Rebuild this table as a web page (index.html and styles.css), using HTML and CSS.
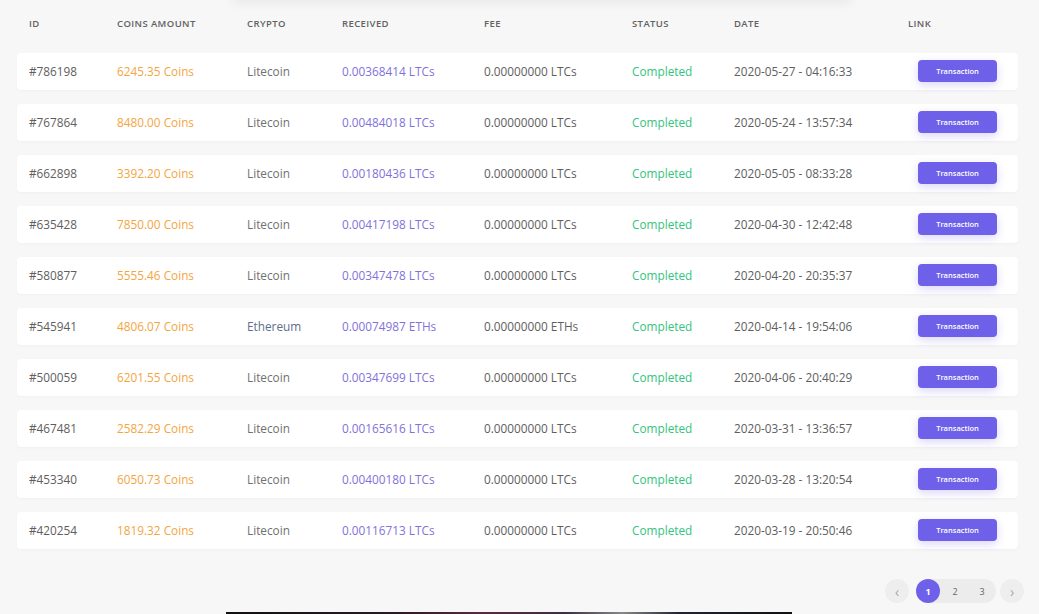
FILE: index.html
```html
<!DOCTYPE html>
<html>
<head>
<meta charset="utf-8">
<link rel="stylesheet" href="styles.css">
</head>
<body>
<div class="top-card"></div>
<div class="table">
  <div class="head">
    <span>ID</span><span>Coins Amount</span><span>Crypto</span><span>Received</span><span>Fee</span><span>Status</span><span>Date</span><span>Link</span>
  </div>
  <div class="row"><span>#786198</span><span class="coins">6245.35 Coins</span><span class="crypto">Litecoin</span><span class="recv">0.00368414 LTCs</span><span>0.00000000 LTCs</span><span class="ok">Completed</span><span>2020-05-27 - 04:16:33</span><span><a class="btn">Transaction</a></span></div>
  <div class="row"><span>#767864</span><span class="coins">8480.00 Coins</span><span class="crypto">Litecoin</span><span class="recv">0.00484018 LTCs</span><span>0.00000000 LTCs</span><span class="ok">Completed</span><span>2020-05-24 - 13:57:34</span><span><a class="btn">Transaction</a></span></div>
  <div class="row"><span>#662898</span><span class="coins">3392.20 Coins</span><span class="crypto">Litecoin</span><span class="recv">0.00180436 LTCs</span><span>0.00000000 LTCs</span><span class="ok">Completed</span><span>2020-05-05 - 08:33:28</span><span><a class="btn">Transaction</a></span></div>
  <div class="row"><span>#635428</span><span class="coins">7850.00 Coins</span><span class="crypto">Litecoin</span><span class="recv">0.00417198 LTCs</span><span>0.00000000 LTCs</span><span class="ok">Completed</span><span>2020-04-30 - 12:42:48</span><span><a class="btn">Transaction</a></span></div>
  <div class="row"><span>#580877</span><span class="coins">5555.46 Coins</span><span class="crypto">Litecoin</span><span class="recv">0.00347478 LTCs</span><span>0.00000000 LTCs</span><span class="ok">Completed</span><span>2020-04-20 - 20:35:37</span><span><a class="btn">Transaction</a></span></div>
  <div class="row"><span>#545941</span><span class="coins">4806.07 Coins</span><span class="crypto eth">Ethereum</span><span class="recv">0.00074987 ETHs</span><span>0.00000000 ETHs</span><span class="ok">Completed</span><span>2020-04-14 - 19:54:06</span><span><a class="btn">Transaction</a></span></div>
  <div class="row"><span>#500059</span><span class="coins">6201.55 Coins</span><span class="crypto">Litecoin</span><span class="recv">0.00347699 LTCs</span><span>0.00000000 LTCs</span><span class="ok">Completed</span><span>2020-04-06 - 20:40:29</span><span><a class="btn">Transaction</a></span></div>
  <div class="row"><span>#467481</span><span class="coins">2582.29 Coins</span><span class="crypto">Litecoin</span><span class="recv">0.00165616 LTCs</span><span>0.00000000 LTCs</span><span class="ok">Completed</span><span>2020-03-31 - 13:36:57</span><span><a class="btn">Transaction</a></span></div>
  <div class="row"><span>#453340</span><span class="coins">6050.73 Coins</span><span class="crypto">Litecoin</span><span class="recv">0.00400180 LTCs</span><span>0.00000000 LTCs</span><span class="ok">Completed</span><span>2020-03-28 - 13:20:54</span><span><a class="btn">Transaction</a></span></div>
  <div class="row"><span>#420254</span><span class="coins">1819.32 Coins</span><span class="crypto">Litecoin</span><span class="recv">0.00116713 LTCs</span><span>0.00000000 LTCs</span><span class="ok">Completed</span><span>2020-03-19 - 20:50:46</span><span><a class="btn">Transaction</a></span></div>
</div>
<div class="pager">
  <span class="pg nav prev">&#8249;</span>
  <div class="pages">
    <span class="pg active">1</span>
    <span class="pg">2</span>
    <span class="pg">3</span>
  </div>
  <span class="pg nav next">&#8250;</span>
</div>
<div class="media"></div>
</body>
</html>
```
FILE: styles.css
```css
* { box-sizing: border-box; }
html, body { margin: 0; padding: 0; }
body {
  background: #f7f7f7;
  font-family: "Open Sans", "Noto Sans", sans-serif;
  color: #555;
  width: 1039px;
  height: 614px;
  overflow: hidden;
}
.top-card {
  width: 620px;
  height: 10px;
  margin: -10px 0 0 232px;
  background: #f7f7f7;
  box-shadow: 0 2px 12px rgba(0,0,0,0.08);
  border-radius: 8px;
}
.table {
  padding: 0 21px 0 17px;
  display: flex;
  flex-direction: column;
  gap: 14px;
}
.head, .row {
  display: grid;
  grid-template-columns: 88px 130px 95px 142px 148px 102px 174px 1fr;
  align-items: center;
  padding-left: 12px;
}
.head {
  height: 29px;
  margin-top: 10px;
  padding-bottom: 2px;
  font-size: 9.5px;
  font-weight: 600;
  letter-spacing: 0.4px;
  text-transform: uppercase;
  color: #626262;
}
.row {
  height: 37px;
  padding-bottom: 1px;
  background: #fff;
  border-radius: 4px;
  box-shadow: 0 1px 3px rgba(0,0,0,0.03);
  font-size: 11.8px;
  color: #5e5e5e;
  white-space: nowrap;
}
.coins { color: #f4a540; }
.crypto { color: #707070; }
.crypto.eth { color: #5c6f8e; }
.recv { color: #7f72da; }
.ok { color: #34c47c; }
.btn {
  display: inline-flex;
  align-items: center;
  justify-content: center;
  margin-left: 10px;
  width: 79px;
  height: 22px;
  border-radius: 4px;
  background: #6e60e8;
  color: #fff;
  font-size: 7.5px;
  font-weight: 600;
  box-shadow: 0 3px 8px rgba(110,96,232,0.25);
}
.pager {
  display: flex;
  justify-content: flex-end;
  align-items: center;
  margin-top: 30px;
  padding-right: 15px;
}
.prev { margin-right: 7px; }
.next { margin-left: 4px; }
.pages {
  display: flex;
  align-items: center;
  background: #ececec;
  border-radius: 12px;
  gap: 3px;
  padding-right: 2px;
}
.pg {
  width: 24px;
  height: 24px;
  border-radius: 50%;
  display: inline-flex;
  align-items: center;
  justify-content: center;
  font-size: 9px;
  color: #666;
}
.pg.nav {
  background: #eeeeee;
  color: #aaa;
  font-size: 14px;
}
.pg.active {
  background: #6e60e8;
  color: #fff;
  font-weight: 700;
}
.media {
  width: 566px;
  height: 10px;
  margin: 9px 0 0 226px;
  background: linear-gradient(90deg, #111 0%, #2a1a22 30%, #5a2a40 45%, #3a3040 60%, #888 70%, #223 80%, #111 100%);
}
```
